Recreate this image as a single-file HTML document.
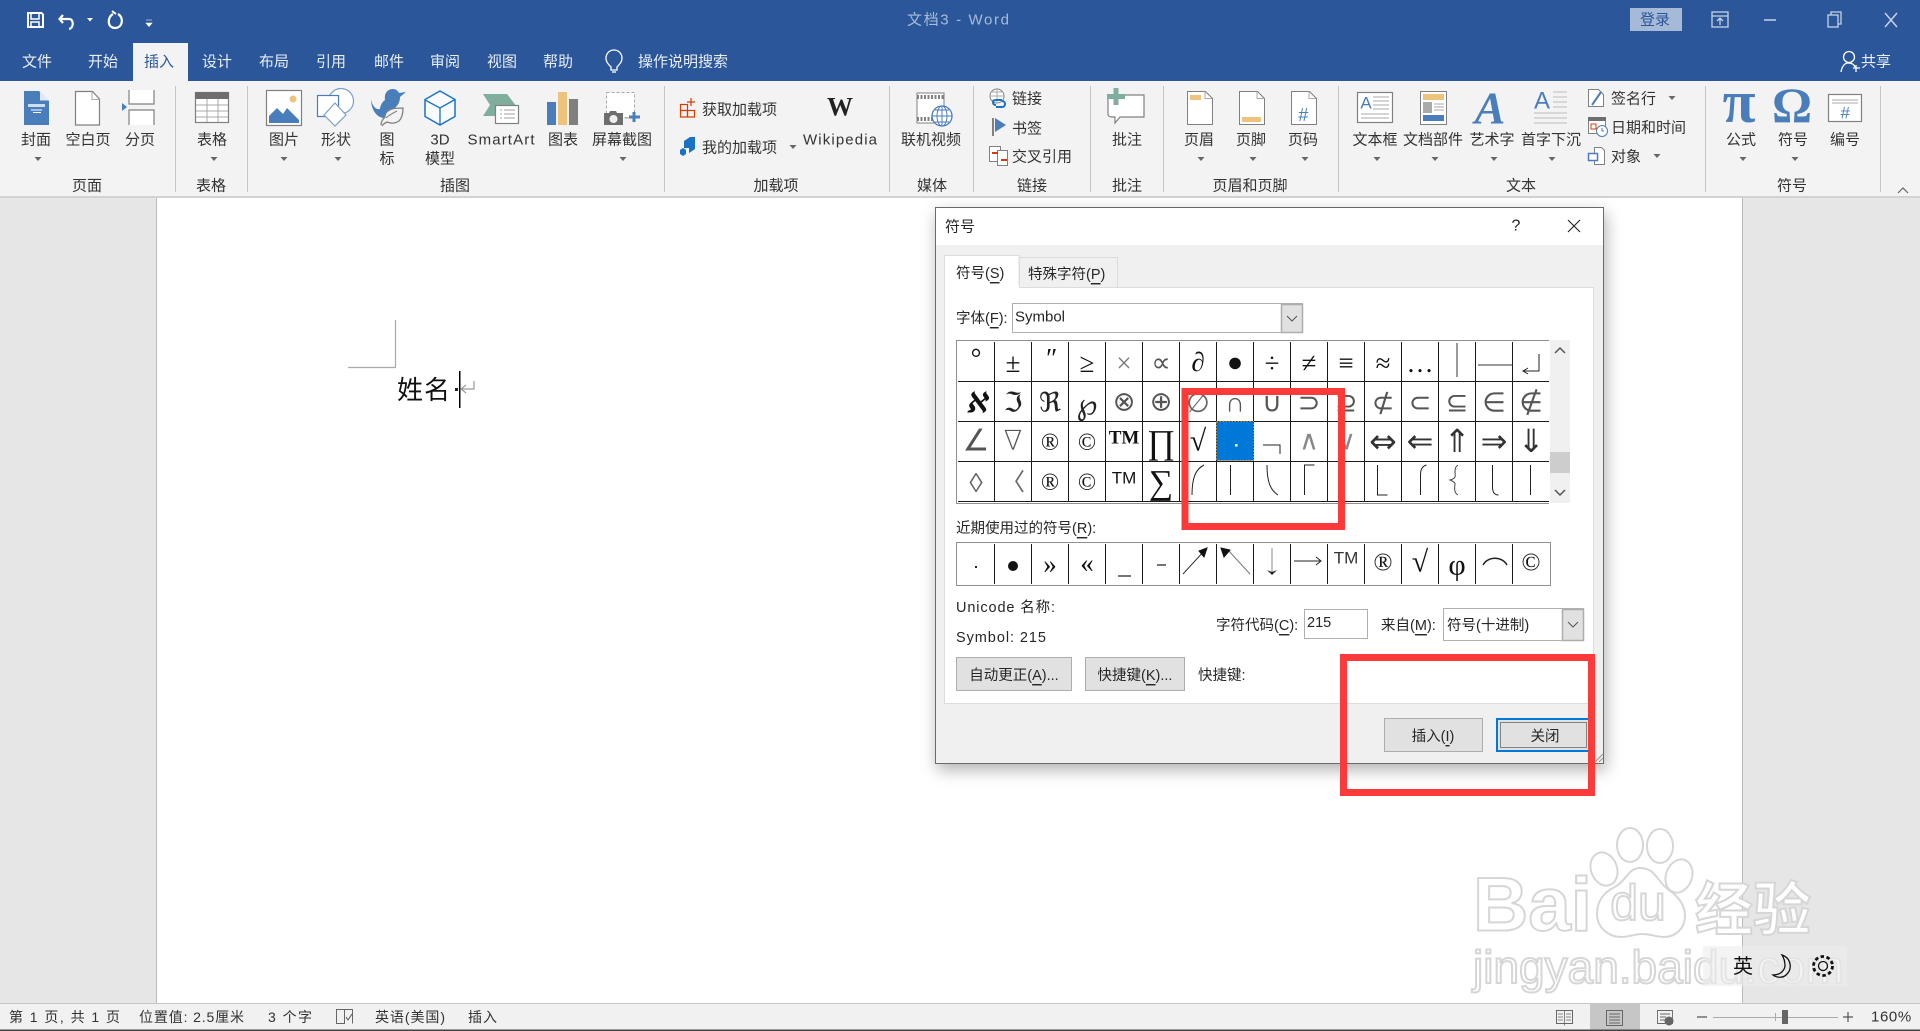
<!DOCTYPE html>
<html lang="zh"><head><meta charset="utf-8"><title>Word</title>
<style>
html,body{margin:0;padding:0;width:1920px;height:1031px;overflow:hidden;background:#e6e6e6}
svg{display:block}
text{font-family:"Liberation Sans","Noto Sans CJK SC",sans-serif;font-size:15px;fill:#333;text-anchor:middle;dominant-baseline:central}
.l{text-anchor:start}
.w{fill:#e9eef6}
.d{fill:#262626;font-size:14.5px;transform:translateY(1px)}
.s{font-family:"Liberation Serif","DejaVu Serif",serif;font-size:27px;fill:#111}
.sd{font-family:"DejaVu Serif",serif;font-size:27px;fill:#222}
.sl{font-family:"DejaVu Sans",sans-serif;font-size:27px;fill:#555;font-weight:200}
.sa{font-family:"DejaVu Sans",sans-serif;font-size:32px;fill:#333}
.wm{font-weight:bold;fill:#fff;stroke:#d6d6d6;stroke-width:2}
</style></head><body>
<svg width="1920" height="1031" viewBox="0 0 1920 1031" xmlns="http://www.w3.org/2000/svg">
<defs>
<filter id="sh" x="-10%" y="-10%" width="120%" height="120%"><feDropShadow dx="2" dy="6" stdDeviation="8" flood-color="#000" flood-opacity=".3"/></filter>
<path id="ar" d="M-3.5 0h7l-3.5 4z" fill="#666"/>
</defs>
<!-- backgrounds -->
<rect width="1920" height="1031" fill="#e6e6e6"/>
<rect width="1920" height="81" fill="#2b579a"/>
<rect y="81" width="1920" height="116" fill="#f3f3f3"/>
<rect y="196" width="1920" height="2" fill="#d2d2d2"/>
<rect x="156" y="198" width="1586" height="805" fill="#fff"/>
<rect x="156" y="198" width="1" height="805" fill="#bbb"/><rect x="1742" y="198" width="1" height="805" fill="#bbb"/>
<rect x="133" y="43" width="55" height="38" fill="#f3f3f3"/>

<!-- QAT -->
<g fill="none" stroke="#fff" stroke-width="2">
<path d="M28 13h13.500l1.500 1.500V27H28z"/><path d="M31 14v5h8v-5M31 27v-5h8v5" stroke-width="1.500"/>
<path d="M63 15l-3.500 4 3.500 4M60 19h9c5 0 5 9 0 10" stroke-width="2.200"/>
<path d="M118 14c6 3 5 14-3 14s-8-11-2-14" stroke-width="2.200"/>
<path d="M112 11l4 3" stroke-width="2"/>
</g>
<path d="M87 18h6l-3 3.500z" fill="#fff"/>
<path d="M146 20h6M146 23h6l-3 3.500z" fill="#fff" stroke="#fff" stroke-width=".6"/>

<!-- title -->
<text class="l" x="907" y="20" textLength="102" style="fill:#a8bcd8;font-size:15px">文档3  -  Word</text>
<rect x="1630" y="8" width="52" height="23" fill="#a6b9d6"/>
<text x="1655" y="20" style="fill:#2b579a">登录</text>
<g fill="none" stroke="#c6d2e5" stroke-width="1.300">
<rect x="1712" y="12" width="16" height="15"/><path d="M1712 16h16M1720 25v-7M1717 21l3-3 3 3"/>
<path d="M1764 20h12" stroke-width="1.500"/>
<rect x="1828" y="15" width="10" height="12"/><path d="M1831 15v-3h10v12h-3"/>
<path d="M1885 13l12 14M1897 13l-12 14" stroke-width="1.500"/>
</g>

<!-- tabs -->
<g>
<text class="w" x="37" y="62">文件</text><text class="w" x="103" y="62">开始</text>
<text x="159" y="62" style="fill:#2b579a">插入</text>
<text class="w" x="217" y="62">设计</text><text class="w" x="274" y="62">布局</text><text class="w" x="331" y="62">引用</text>
<text class="w" x="389" y="62">邮件</text><text class="w" x="445" y="62">审阅</text><text class="w" x="502" y="62">视图</text>
<text class="w" x="558" y="62">帮助</text><text class="w" x="683" y="62">操作说明搜索</text>
<text class="w" x="1876" y="62">共享</text>
</g>
<g fill="none" stroke="#fff" stroke-width="1.300">
<path d="M611 67c-4-4-5-6-5-9a8 8 0 0 1 16 0c0 3-1 5-5 9v3h-6z"/><path d="M612 72h4"/>
<circle cx="1849" cy="57" r="5.500"/><path d="M1841 72c1-6 4-9 7-9s6 1 7 4M1853 68h7M1856 65v7"/>
</g>

<!-- separators -->
<g fill="#c6c6c6">
<rect x="175" y="86" width="1" height="106"/><rect x="247" y="86" width="1" height="106"/><rect x="664" y="86" width="1" height="106"/><rect x="889" y="86" width="1" height="106"/><rect x="973" y="86" width="1" height="106"/><rect x="1090" y="86" width="1" height="106"/><rect x="1163" y="86" width="1" height="106"/><rect x="1338" y="86" width="1" height="106"/><rect x="1705" y="86" width="1" height="106"/><rect x="1880" y="86" width="1" height="106"/>
</g>

<!-- ribbon labels -->
<g>
<text x="36" y="140">封面</text><text x="88" y="140">空白页</text><text x="140" y="140">分页</text>
<text x="212" y="140">表格</text><text x="284" y="140">图片</text><text x="336" y="140">形状</text>
<text x="387" y="140">图</text><text x="387" y="159">标</text><text x="440" y="140">3D</text><text x="440" y="159">模型</text>
<text x="501" y="140" textLength="67">SmartArt</text><text x="563" y="140">图表</text><text x="622" y="140">屏幕截图</text>
<text class="l" x="702" y="110">获取加载项</text><text class="l" x="702" y="148">我的加载项</text>
<text x="840" y="140" textLength="74">Wikipedia</text><text x="931" y="140">联机视频</text>
<text class="l" x="1012" y="99">链接</text><text class="l" x="1012" y="129">书签</text><text class="l" x="1012" y="157">交叉引用</text>
<text x="1127" y="140">批注</text><text x="1199" y="140">页眉</text><text x="1251" y="140">页脚</text><text x="1303" y="140">页码</text>
<text x="1375" y="140">文本框</text><text x="1433" y="140">文档部件</text><text x="1492" y="140">艺术字</text><text x="1551" y="140">首字下沉</text>
<text class="l" x="1611" y="99">签名行</text><text class="l" x="1611" y="128">日期和时间</text><text class="l" x="1611" y="157">对象</text>
<text x="1741" y="140">公式</text><text x="1793" y="140">符号</text><text x="1845" y="140">编号</text>
<text x="87" y="186">页面</text><text x="211" y="186">表格</text><text x="455" y="186">插图</text><text x="776" y="186">加载项</text><text x="932" y="186">媒体</text>
<text x="1032" y="186">链接</text><text x="1127" y="186">批注</text><text x="1250" y="186">页眉和页脚</text><text x="1521" y="186">文本</text><text x="1792" y="186">符号</text>
</g>
<!-- dropdown arrows -->
<use href="#ar" x="38" y="157"/><use href="#ar" x="214" y="157"/><use href="#ar" x="284" y="157"/><use href="#ar" x="338" y="157"/><use href="#ar" x="623" y="157"/>
<use href="#ar" x="793" y="145"/><use href="#ar" x="1201" y="157"/><use href="#ar" x="1253" y="157"/><use href="#ar" x="1305" y="157"/>
<use href="#ar" x="1377" y="157"/><use href="#ar" x="1435" y="157"/><use href="#ar" x="1494" y="157"/><use href="#ar" x="1552" y="157"/>
<use href="#ar" x="1672" y="96"/><use href="#ar" x="1657" y="154"/><use href="#ar" x="1743" y="157"/><use href="#ar" x="1795" y="157"/>
<path d="M1898 193l5-5 5 5" fill="none" stroke="#666" stroke-width="1.200"/>

<!-- 封面 -->
<path d="M24 91h15l10 10v24H24z" fill="#4a7ebb"/><path d="M40 91l9 9.500h-9z" fill="#dfe8f3"/>
<rect x="28" y="104" width="17" height="3" fill="#cfdcec"/><path d="M31 110h11M33 112.500h8" stroke="#fff"/>
<!-- 空白页 -->
<path d="M75.500 91.500h17l7 7.500v26h-24z" fill="#fff" stroke="#808080" stroke-width="1.200"/><path d="M92 91.500v8h7.500" fill="none" stroke="#aaa"/>
<!-- 分页 -->
<path d="M129 90v14h25V90M129 125v-15h25v15" fill="#fff" stroke="#808080" stroke-width="1.200"/>
<path d="M122 103l5 4-5 4z" fill="#4a7ebb"/>
<!-- 表格 -->
<rect x="195.500" y="92.500" width="33" height="30" fill="#fff" stroke="#808080" stroke-width="1.200"/><rect x="195" y="92" width="34" height="7" fill="#6e6e6e"/>
<path d="M207 99v23M218 99v23M196 105h32M196 111h32M196 117h32" stroke="#a8a8a8"/>
<!-- 图片 -->
<rect x="266.500" y="90.500" width="35" height="35" fill="#fff" stroke="#808080" stroke-width="1.200"/><circle cx="293" cy="99" r="3.500" fill="#eec37e"/>
<path d="M269 123v-7l8-8 6 6 4-6 12 12v3z" fill="#4a7ebb"/>
<!-- 形状 -->
<circle cx="341" cy="101" r="12.500" fill="#fff" stroke="#7ba0cf" stroke-width="1.200"/>
<rect x="317.500" y="95.500" width="21" height="21" fill="#fff" stroke="#4a7ebb" stroke-width="1.200"/>
<path d="M335 103l11 12-11 11-11-11z" fill="#fff" stroke="#7ba0cf" stroke-width="1.200"/>
<!-- 图标 -->
<path d="M371 99c1 7 5 11 9 10 0-3 2-7 5-9-1-6 2-11 8-11 3 0 5 2 6 4l7-1-6 5c0 5-2 8-5 11-6 1-10 5-11 10-6 0-13-7-13-19z" fill="#4a7ebb"/>
<path d="M381 125c0-3 2-6 4-8 0-4 3-7 7-8 4-1 8-1 11-1 0 5-1 10-4 13-3 2-7 3-12 1-2 1-4 2-5 4" fill="#f3f3f3" stroke="#808080" stroke-width="1.300"/>
<path d="M386 118c3-3 7-5 11-7" stroke="#808080" fill="none"/>
<!-- 3D -->
<path d="M440 91l15 8.500v17L440 125l-15-8.500v-17z" fill="#f9fafb" stroke="#1a72c4" stroke-width="1.500"/><path d="M425 100l15 8 15-8.500M440 108v17" fill="none" stroke="#1a72c4" stroke-width="1.300"/>
<!-- SmartArt -->
<path d="M483 94h24l10 13-6 2H495v7h-12l7-11z" fill="#7fae9c"/><path d="M483 116h12v-2h-6" fill="#7fae9c"/>
<rect x="495.500" y="105.500" width="23" height="18" fill="#fff" stroke="#808080" stroke-width="1.200"/><path d="M500 110h2M504 110h11M500 114h2M504 114h11M500 118h2M504 118h11" stroke="#a0a0a0"/>
<!-- 图表 -->
<rect x="547" y="102" width="9" height="23" fill="#4a7ebb"/><rect x="558" y="92" width="9" height="33" fill="#eec37e"/><rect x="569" y="99" width="9" height="26" fill="#7f7f7f"/>
<!-- 屏幕截图 -->
<rect x="606.500" y="92.500" width="28" height="25" fill="#fff" stroke="#aaa" stroke-dasharray="3 2"/>
<path d="M604 113h5l1-2h6l1 2h6v12h-19z" fill="#6e6e6e"/><circle cx="613.500" cy="119" r="3.500" fill="#eee" stroke="#f3f3f3"/>
<path d="M625 118h4" stroke="#aaa"/><path d="M634 112v10M629 117h11" stroke="#4a7ebb" stroke-width="3"/>
<!-- 加载项 -->
<g fill="none" stroke="#d83b01" stroke-width="1.200"><rect x="680.500" y="104.500" width="7" height="6"/><rect x="680.500" y="110.500" width="7" height="6.500"/><rect x="687.500" y="110.500" width="7" height="6.500"/><path d="M691 98v8M687 102h8"/></g>
<path d="M684 141l6-4h5v12l-6 4v-5h-5z" fill="#1a72c4"/><path d="M680 150l3-2 3 2v4l-3 2-3-2z" fill="#1a72c4"/>
<text x="840" y="107" style="font-family:'Liberation Serif',serif;font-size:26px;font-weight:bold;fill:#222">W</text>
<!-- 联机视频 -->
<rect x="917" y="93" width="27" height="30" fill="#fff" stroke="#808080"/><path d="M917 97h27M917 119h27" stroke="#808080" stroke-width="4" stroke-dasharray="2 1.500"/>
<circle cx="942" cy="116" r="10" fill="#fff" stroke="#4a7ebb" stroke-width="1.300"/><path d="M932 116h20M942 106v20M935 110h14M935 122h14" stroke="#4a7ebb"/><ellipse cx="942" cy="116" rx="5" ry="10" fill="none" stroke="#4a7ebb"/>
<!-- 链接 书签 交叉引用 -->
<circle cx="997" cy="96" r="7" fill="#fff" stroke="#808080"/><path d="M990 96h14M997 89v14M992 92h10M992 100h10" stroke="#aaa"/>
<path d="M996 105c-4 0-4-5 0-5h6M1002 101c4 0 4 6 0 6h-6" fill="none" stroke="#1a72c4" stroke-width="2"/>
<rect x="992" y="118" width="2" height="18" fill="#808080"/><path d="M995 118l11 7-11 7z" fill="#4a7ebb"/>
<rect x="989.500" y="146.500" width="11" height="15" fill="#fff" stroke="#808080"/><rect x="997.500" y="150.500" width="10" height="15" fill="#fff" stroke="#808080"/>
<path d="M992 153h6M1001 160h6" stroke="#d83b01" stroke-width="2"/>
<!-- 批注 -->
<path d="M1112 95h32v22h-24l-5 6v-6h-3c-2 0-4-1-4-3V98z" fill="#fff" stroke="#808080" stroke-width="1.200"/>
<path d="M1116 88v17M1107 96.500h18" stroke="#7fae9c" stroke-width="5"/>
<!-- 页眉 页脚 页码 -->
<g fill="#fff" stroke="#808080" stroke-width="1"><path d="M1187.500 91.500h18l7 7v26h-25z"/><path d="M1239.500 91.500h18l7 7v26h-25z"/><path d="M1291.500 91.500h18l7 7v26h-25z"/></g>
<path d="M1205 91.500v7h7M1257 91.500v7h7M1309 91.500v7h7" fill="none" stroke="#aaa"/>
<rect x="1190" y="95" width="11" height="5" fill="#eec37e"/><rect x="1242" y="117" width="19" height="5" fill="#eec37e"/>
<text x="1303" y="115" style="font-size:18px;fill:#4a7ebb;font-style:italic">#</text>
<!-- 文本框 -->
<rect x="1357.500" y="92.500" width="35" height="30" fill="#fff" stroke="#808080" stroke-width="1.200"/>
<text x="1366" y="103" style="font-size:17px;fill:#4a7ebb">A</text>
<path d="M1373 97h16M1373 101h16M1373 105h16M1373 109h16M1361 114h28M1361 118h28" stroke="#aaa"/>
<!-- 文档部件 -->
<rect x="1420.500" y="91.500" width="26" height="33" fill="#fff" stroke="#808080"/><rect x="1423" y="94" width="21" height="6" fill="#eec37e"/><rect x="1423" y="102" width="9" height="11" fill="#aaa"/><rect x="1423" y="115" width="21" height="6" fill="#4a7ebb"/>
<path d="M1434 104h10M1434 107h10M1434 110h10" stroke="#aaa"/>
<!-- 艺术字 -->
<text x="1490" y="108" style="font-family:'Liberation Serif',serif;font-style:italic;font-weight:bold;font-size:46px;fill:#4a7ebb">A</text>
<!-- 首字下沉 -->
<text x="1542" y="101" style="font-size:24px;fill:#4a7ebb">A</text>
<path d="M1553 92h14M1553 97h14M1553 102h14M1553 107h14M1534 113h33M1534 118h33M1534 123h33" stroke="#bbb"/>
<!-- 签名行 日期 对象 -->
<path d="M1588.500 89.500h10l5 5v12h-15z" fill="#fff" stroke="#808080"/><path d="M1592 105l9-13" stroke="#4a7ebb" stroke-width="2"/>
<rect x="1588.500" y="117.500" width="17" height="16" fill="#fff" stroke="#808080"/><rect x="1588" y="117" width="18" height="4" fill="#6e6e6e"/><rect x="1591" y="124" width="5" height="5" fill="none" stroke="#d83b01"/>
<circle cx="1602" cy="131" r="5.500" fill="#fff" stroke="#4a7ebb"/><path d="M1602 128v3h2" fill="none" stroke="#4a7ebb"/>
<path d="M1594.500 147.500h7l3 3v14h-10z" fill="#fff" stroke="#808080"/><rect x="1588.500" y="153.500" width="9" height="7" fill="#fff" stroke="#4a7ebb" stroke-width="1.500"/>
<!-- π Ω # -->
<text x="1739" y="102" style="font-family:'Liberation Serif',serif;font-size:60px;font-weight:bold;fill:#4a7ebb">π</text>
<text x="1792" y="105" style="font-family:'Liberation Serif',serif;font-size:50px;font-weight:bold;fill:#4a7ebb">Ω</text>
<rect x="1828.500" y="94.500" width="33" height="27" fill="#fff" stroke="#808080" stroke-width="1.200"/><path d="M1832 100h26M1832 103h26" stroke="#aaa"/>
<text x="1845" y="113" style="font-size:17px;fill:#4a7ebb;font-style:italic">#</text>

<!-- document -->
<path d="M348 367.500h47.500V320" fill="none" stroke="#aaa" stroke-width="1.200"/>
<text class="l" x="397" y="390" style="font-size:26px;fill:#111;letter-spacing:1px">姓名</text>
<rect x="455" y="388" width="3" height="3" fill="#222"/>
<rect x="459" y="371" width="1.500" height="37" fill="#000"/>
<path d="M474 381v8h-13M466 385l-5 4 5 4" fill="none" stroke="#999" stroke-width="1.200"/>

<!-- watermark -->
<g>
<text class="l wm" x="1473" y="905" textLength="119" lengthAdjust="spacingAndGlyphs" style="font-size:76px">Bai</text>
<g fill="#fff" stroke="#d6d6d6" stroke-width="2">
<ellipse cx="1630" cy="845" rx="13" ry="17"/><ellipse cx="1660" cy="846" rx="13" ry="17"/>
<ellipse cx="1604" cy="869" rx="13" ry="17" transform="rotate(-20 1604 869)"/><ellipse cx="1679" cy="876" rx="13" ry="17" transform="rotate(20 1679 876)"/>
<path d="M1640 868c-12 0-14 14-27 20-10 5-16 14-16 26 0 14 12 23 24 23 8 0 14-3 21-3 9 0 14 3 22 3 12 0 21-9 21-21 0-11-6-19-16-26-12-8-13-22-29-22z"/>
</g>
<text class="wm" x="1638" y="903" style="font-size:50px;font-weight:normal">du</text>
<text class="wm" x="1753" y="905" style="font-size:58px;font-family:'Noto Sans CJK SC',sans-serif">经验</text>
<text class="l wm" x="1473" y="967" style="font-size:46px;font-weight:normal">jingyan.baidu.com</text>
</g>
<!-- IME -->
<rect x="1703" y="946" width="144" height="40" fill="#ececec" opacity=".6"/>
<text x="1743" y="967" style="font-size:20px;fill:#111">英</text>
<path d="M1782 955c9 3 11 14 4 20-3 3-9 3-13 0 6 0 11-3 12-9 0-4-1-8-3-11z" fill="none" stroke="#111" stroke-width="1.300"/>
<circle cx="1823" cy="966" r="4.500" fill="none" stroke="#111" stroke-width="1.300"/><circle cx="1823" cy="966" r="9.500" fill="none" stroke="#111" stroke-width="2.800" stroke-dasharray="3.500 2.500"/>

<!-- status bar -->
<rect y="1003" width="1920" height="28" fill="#f1f1f1"/><rect y="1003" width="1920" height="1" fill="#c6c6c6"/>
<rect y="1029.500" width="1920" height="1.500" fill="#444"/>
<rect x="1590" y="1004" width="50" height="25.500" fill="#c6c6c6"/>
<g>
<text class="l" x="9" y="1017" textLength="111" style="font-size:14px">第 1 页, 共 1 页</text><text class="l" x="139" y="1017" textLength="105" style="font-size:14px">位置值: 2.5厘米</text><text class="l" x="268" y="1017" textLength="44" style="font-size:14px">3 个字</text><text class="l" x="375" y="1017" textLength="70" style="font-size:14px">英语(美国)</text><text class="l" x="468" y="1017" textLength="29" style="font-size:14px">插入</text>
<text class="l" x="1871" y="1017" style="font-size:15px;letter-spacing:.6px">160%</text>
</g>
<g fill="none" stroke="#666">
<path d="M336.500 1009.500h8v14h-8zM344.500 1009.500h8v14" /><path d="M346 1017l2 3 4-6" stroke="#555"/>
<rect x="1556.500" y="1010.500" width="16" height="13"/><path d="M1564.500 1010.500v15M1558 1014h5M1558 1017h5M1558 1020h5M1566 1014h5M1566 1017h5M1566 1020h5" stroke-width=".8"/>
<rect x="1606.500" y="1010.500" width="16" height="15"/><path d="M1609 1014h11M1609 1017h11M1609 1020h11M1609 1023h11" stroke-width=".9"/>
<path d="M1657.500 1010.500h15v13h-15zM1660 1014h10M1660 1017h6M1660 1020h5" stroke-width=".9"/>
</g>
<circle cx="1669" cy="1021" r="4.500" fill="#666"/>
<path d="M1697 1017h10M1843 1017h10M1848 1012v10" stroke="#555" stroke-width="1.200"/>
<rect x="1713" y="1017" width="125" height="1" fill="#aaa"/><rect x="1775" y="1013" width="1" height="8" fill="#aaa"/><rect x="1782" y="1010" width="6" height="14" fill="#666"/>

<!-- dialog -->
<rect x="935.500" y="207.500" width="668" height="556" fill="#f0f0f0" stroke="#6b6b6b" filter="url(#sh)"/>
<rect x="936" y="208" width="667" height="37" fill="#fff"/>
<text class="l d" x="945" y="226" style="font-size:15px">符号</text>
<text x="1516" y="226" style="font-size:16px;fill:#222">?</text>
<path d="M1568 220l12 12M1580 220l-12 12" stroke="#222" stroke-width="1.100"/>
<rect x="944.500" y="287.500" width="649" height="416" fill="#fff" stroke="#dcdcdc"/>
<rect x="1019.500" y="257.500" width="98" height="30" fill="#f0f0f0" stroke="#dcdcdc"/>
<path d="M944.500 288v-32.500h74.500V288" fill="#fff" stroke="#dcdcdc"/>
<rect x="945" y="285" width="74" height="4" fill="#fff"/>
<text class="l d" x="956" y="273">符号(<tspan text-decoration="underline">S</tspan>)</text>
<text class="l d" x="1028" y="274">特殊字符(<tspan text-decoration="underline">P</tspan>)</text>
<text class="l d" x="956" y="318">字体(<tspan text-decoration="underline">F</tspan>):</text>
<rect x="1012.500" y="303.500" width="290" height="29" fill="#fff" stroke="#b0b0b0"/>
<rect x="1281.500" y="304.500" width="21" height="28" fill="#e1e1e1" stroke="#adadad" stroke-width="1.500"/><path d="M1287 316l5 5 5-5" fill="none" stroke="#555"/>
<text class="l d" x="1015" y="316" style="font-size:15px">Symbol</text>

<!-- symbol grid -->
<rect x="956.500" y="340.500" width="593" height="162.500" fill="#fff"/>
<path d="M1549 340.500H956.500V503.500H1549" fill="none" stroke="#8f8f8f"/>
<g stroke="#1a1a1a"><path d="M958 381.500h591M958 421.500h591M958 461.500h591M958 501.500h591"/>
<path d="M994.500 342v159M1031.500 342v159M1068.500 342v159M1105.500 342v159M1142.500 342v159M1179.500 342v159M1216.500 342v159M1253.500 342v159M1290.500 342v159M1327.500 342v159M1364.500 342v159M1401.500 342v159M1438.500 342v159M1475.500 342v159M1512.500 342v159"/></g>
<!-- rows -->
<g>
<text class="s" x="976" y="358">°</text><text class="s" x="1013" y="363">±</text><text class="s" x="1050" y="358" style="font-style:italic">″</text><text class="s" x="1087" y="363">≥</text><text class="s" x="1124" y="363" style="fill:#777">×</text><text class="sl" x="1161" y="363">∝</text><text class="s" x="1198" y="362">∂</text><text class="s" x="1235" y="362">●</text><text class="s" x="1272" y="363">÷</text><text class="s" x="1309" y="363">≠</text><text class="s" x="1346" y="363">≡</text><text class="s" x="1383" y="363">≈</text><text class="s" x="1420" y="363">…</text>
<path d="M1457 343v34" stroke="#333"/><path d="M1478 365h35" stroke="#333"/><path d="M1539 354v17h-15M1528 368l-5 3 5 3" fill="none" stroke="#222"/>

<text class="s" x="976" y="403" style="font-weight:bold;font-style:italic">ℵ</text><text class="sd" x="1013" y="403">ℑ</text><text class="sd" x="1050" y="403">ℜ</text><text class="sd" x="1087" y="405" style="font-size:30px">℘</text><text class="sl" x="1124" y="402">⊗</text><text class="sl" x="1161" y="402">⊕</text><text class="s" x="1198" y="403" style="fill:#666">∅</text><text class="sl" x="1235" y="403">∩</text><text class="sl" x="1272" y="403">∪</text><text class="sl" x="1309" y="403">⊃</text><text class="sl" x="1346" y="403">⊇</text><text class="sl" x="1383" y="403">⊄</text><text class="sl" x="1420" y="403">⊂</text><text class="sl" x="1457" y="403">⊆</text><text class="sl" x="1494" y="403">∈</text><text class="sl" x="1531" y="403">∉</text>

<text class="sl" x="976" y="441" style="font-size:30px">∠</text><text class="sl" x="1013" y="441">∇</text><text class="s" x="1050" y="443" style="font-size:24px">®</text><text class="s" x="1087" y="443" style="font-size:24px">©</text><text class="s" x="1124" y="438" style="font-size:19px;font-weight:bold">TM</text><text class="s" x="1161" y="443" style="font-size:34px">∏</text><text class="s" x="1198" y="441" style="font-size:30px">√</text>
<rect x="1216.500" y="421.500" width="37" height="39" fill="#0078d7" stroke="#c48a2a" stroke-dasharray="1.500 1.500"/><rect x="1235" y="444" width="2.500" height="2.500" fill="#fff"/>
<path d="M1263 445h17v9" fill="none" stroke="#222"/><text class="sl" x="1309" y="441" style="fill:#888">∧</text><text class="sl" x="1346" y="441" style="fill:#888">∨</text><text class="sa" x="1383" y="441" style="font-size:33px">⇔</text><text class="sa" x="1420" y="441">⇐</text><text class="sa" x="1457" y="441">⇑</text><text class="sa" x="1494" y="441">⇒</text><text class="sa" x="1531" y="441">⇓</text>

<text class="s" x="976" y="483" style="fill:#666">◊</text><text class="s" x="1013" y="483" style="fill:#666;font-size:24px">〈</text><text class="s" x="1050" y="483" style="font-size:24px;font-weight:normal">®</text><text class="s" x="1087" y="483" style="font-size:24px">©</text><text class="s" x="1124" y="478" style="font-size:17px;font-family:'Liberation Sans',sans-serif">TM</text><text class="s" x="1161" y="483" style="font-size:34px">∑</text>
<g fill="none" stroke="#222"><path d="M1204 465c-8 4-12 12-12 30"/><path d="M1230.500 465v30"/><path d="M1267 465c0 16 3 25 11 30"/><path d="M1304.500 495v-30h10"/><path d="M1377.500 465v30h10"/><path d="M1420.500 495v-20c0-6 2-9 6-10"/><path d="M1458 465c-5 3-2 10-3 12s-5 3-5 3 5 2 5 4-2 8 3 11" stroke="#444"/><path d="M1492.500 465v22c0 5 2 8 6 8"/><path d="M1530.500 465v30"/></g>
</g>
<!-- scrollbar -->
<rect x="1550" y="340" width="20" height="163" fill="#f0f0f0"/><rect x="1550" y="452" width="20" height="21" fill="#cdcdcd"/>
<path d="M1555 353l5-5 5 5M1555 490l5 5 5-5" fill="none" stroke="#555" stroke-width="1.500"/>

<!-- recent -->
<text class="l d" x="956" y="528">近期使用过的符号(<tspan text-decoration="underline">R</tspan>):</text>
<rect x="956.500" y="542.500" width="594" height="43" fill="#fff" stroke="#8f8f8f"/>
<path d="M994.500 544v40M1031.500 544v40M1068.500 544v40M1105.500 544v40M1142.500 544v40M1179.500 544v40M1216.500 544v40M1253.500 544v40M1290.500 544v40M1327.500 544v40M1364.500 544v40M1401.500 544v40M1438.500 544v40M1475.500 544v40M1512.500 544v40" stroke="#1a1a1a"/>
<rect x="975" y="566" width="2" height="2" fill="#222"/><circle cx="1013" cy="566" r="5" fill="#111"/>
<text class="s" x="1050" y="564">»</text><text class="s" x="1087" y="563">«</text>
<path d="M1118 576h13M1157 565h9" stroke="#222" stroke-width="1.300"/>
<path d="M1183 574l22-24" stroke="#333"/><path d="M1199 551l8-3-3 9z" fill="#111" stroke="#111"/>
<path d="M1250 574l-22-24" stroke="#777"/><path d="M1221 548l9 2-6 7z" fill="#111" stroke="#111"/>
<path d="M1272 548v25" stroke="#888"/><path d="M1267 570l5 5 5-5-5 2z" fill="#222"/>
<path d="M1294 561h27M1316 557l5 4-5 4" fill="none" stroke="#222"/>
<text class="s" x="1346" y="558" style="font-size:17px;font-family:'Liberation Sans',sans-serif;fill:#333">TM</text>
<text class="s" x="1383" y="563" style="font-size:25px">®</text><text class="s" x="1420" y="562" style="font-size:30px">√</text><text class="s" x="1457" y="565" style="font-size:30px">φ</text>
<path d="M1483 565c5-9 19-9 24 0" fill="none" stroke="#222" stroke-width="1.500"/>
<text class="s" x="1531" y="563" style="font-size:25px">©</text>

<text class="l d" x="956" y="607" textLength="99">Unicode 名称:</text>
<text class="l d" x="956" y="637" textLength="90">Symbol: 215</text>
<text class="l d" x="1216" y="625">字符代码(<tspan text-decoration="underline">C</tspan>):</text>
<rect x="1304.500" y="609.500" width="63" height="29" fill="#fff" stroke="#b0b0b0"/>
<text class="l d" x="1307" y="622">215</text>
<text class="l d" x="1381" y="625">来自(<tspan text-decoration="underline">M</tspan>):</text>
<rect x="1443.500" y="608.500" width="140" height="32" fill="#fff" stroke="#b0b0b0"/>
<rect x="1562.500" y="609.500" width="21" height="31" fill="#e1e1e1" stroke="#adadad" stroke-width="1.500"/><path d="M1568 622l5 5 5-5" fill="none" stroke="#555"/>
<text class="l d" x="1447" y="625">符号(十进制)</text>
<g fill="#e1e1e1" stroke="#adadad"><rect x="956.500" y="657.500" width="115" height="33"/><rect x="1085.500" y="657.500" width="99" height="33"/><rect x="1384.500" y="718.500" width="98" height="33"/></g>
<text class="d" x="1014" y="675">自动更正(<tspan text-decoration="underline">A</tspan>)...</text>
<text class="d" x="1135" y="675">快捷键(<tspan text-decoration="underline">K</tspan>)...</text>
<text class="l d" x="1198" y="675">快捷键:</text>
<text class="d" x="1433" y="736">插入(<tspan text-decoration="underline">I</tspan>)</text>
<rect x="1497" y="719" width="92" height="32" fill="#e1e1e1" stroke="#0078d7" stroke-width="2"/><rect x="1500.500" y="722.500" width="86" height="25" fill="none" stroke="#222" stroke-dasharray="1 1"/>
<text class="d" x="1545" y="736">关闭</text>
<path d="M1595 762l8-8M1599 762l4-4" stroke="#999" stroke-width="1.200"/>

<!-- red boxes -->
<rect x="1185" y="391.500" width="156.500" height="135" fill="none" stroke="#fc3a3a" stroke-width="7"/>
<rect x="1343.500" y="657.500" width="248" height="135" fill="none" stroke="#fc3a3a" stroke-width="7"/>
</svg>
</body></html>
